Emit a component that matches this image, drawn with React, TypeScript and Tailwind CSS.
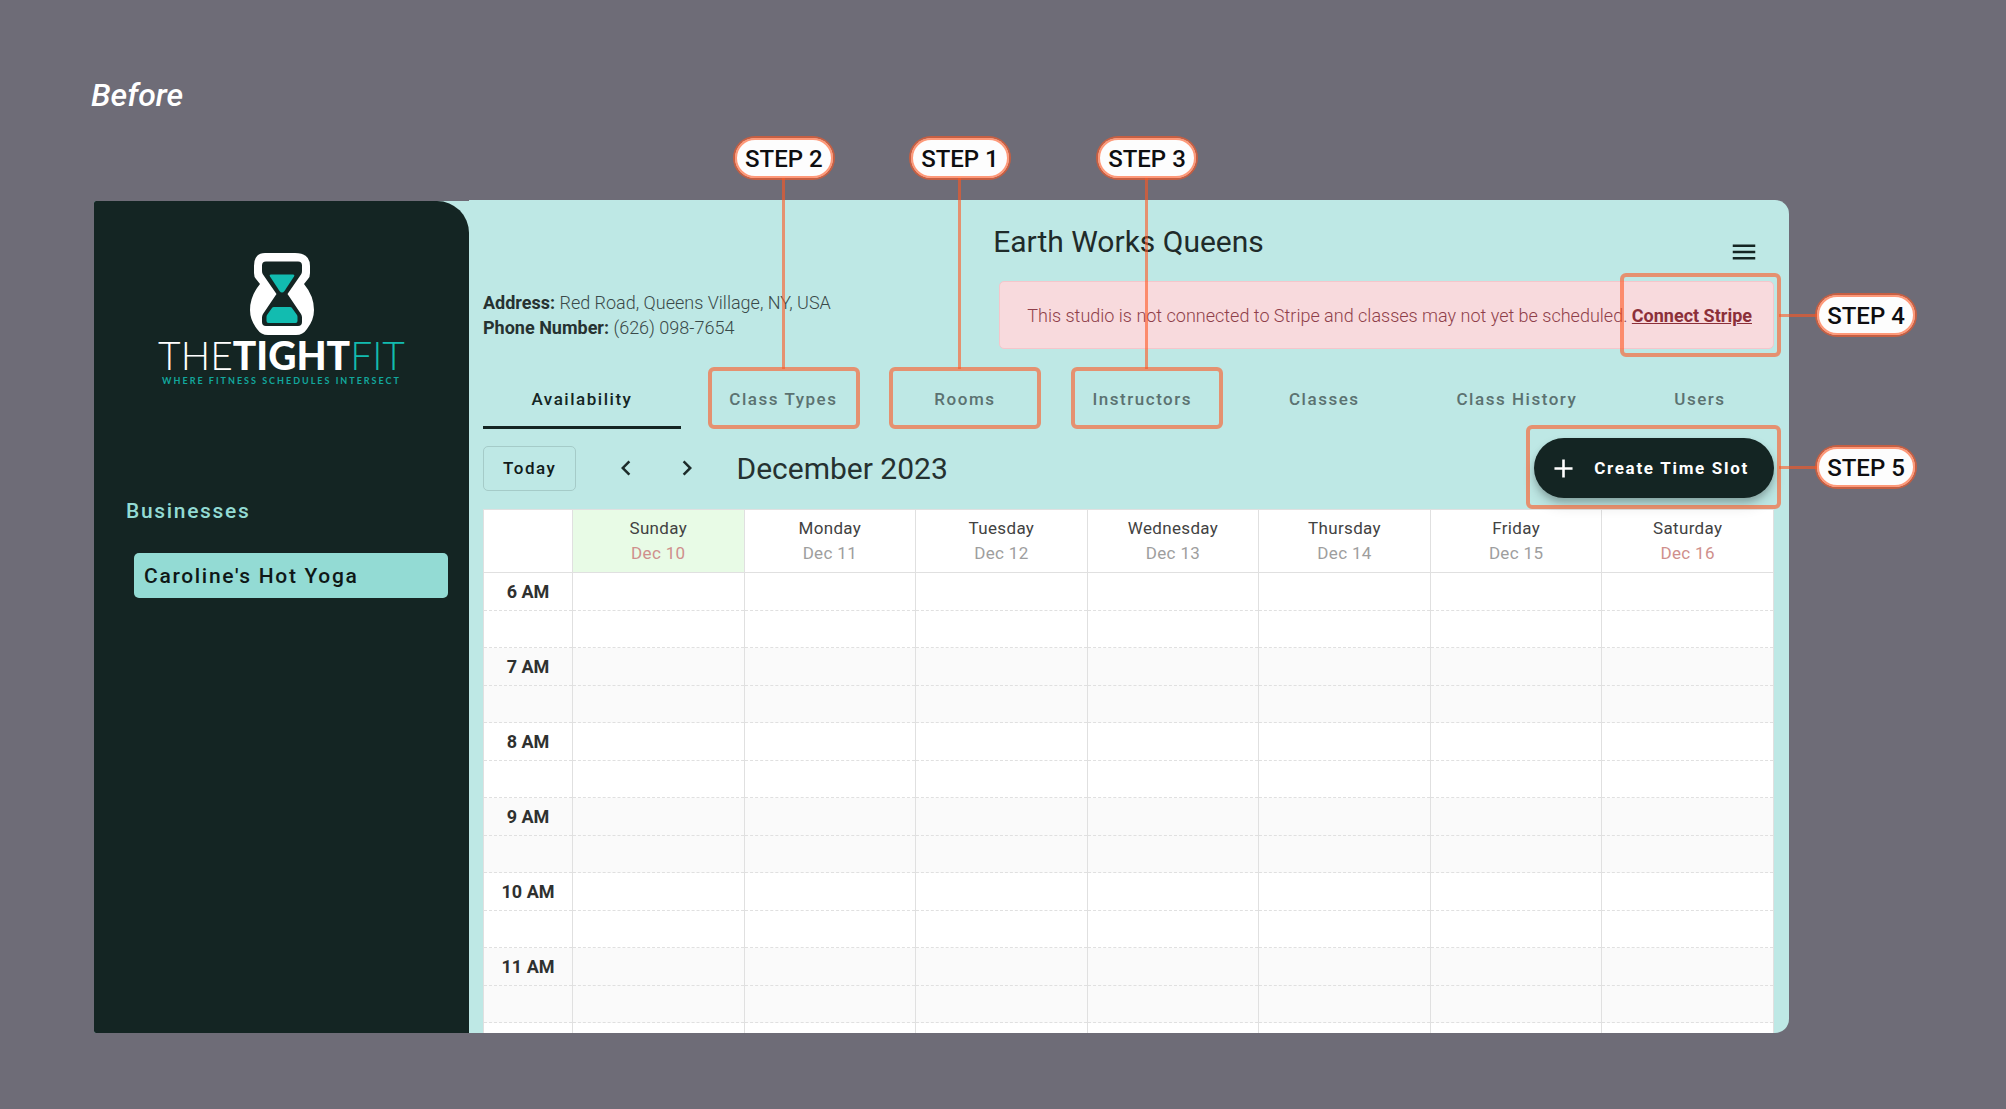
import type { ReactNode } from "react";

const days = [
  { name: "Sunday", date: "Dec 10", today: true, weekend: true },
  { name: "Monday", date: "Dec 11" },
  { name: "Tuesday", date: "Dec 12" },
  { name: "Wednesday", date: "Dec 13" },
  { name: "Thursday", date: "Dec 14" },
  { name: "Friday", date: "Dec 15" },
  { name: "Saturday", date: "Dec 16", weekend: true },
];

const hours = ["6 AM", "7 AM", "8 AM", "9 AM", "10 AM", "11 AM"];

function StepPill({ children }: { children: ReactNode }) {
  return (
    <span className="flex h-10 w-[98px] shrink-0 items-center justify-center rounded-full bg-[#fdfdfd] pt-[2px] text-[24px] leading-8 font-medium whitespace-nowrap text-[#0e0e10] ring-2 ring-[#ff5722]/60 inset-ring-2 inset-ring-[#ff5722]/60">
      {children}
    </span>
  );
}

function TopStep({ label, className }: { label: string; className: string }) {
  return (
    <div className={`pointer-events-none absolute bottom-[60px] z-10 flex -translate-x-1/2 flex-col items-center ${className}`}>
      <StepPill>{label}</StepPill>
      <span className="h-[191px] w-[3px] bg-[#ff5722]/60" />
    </div>
  );
}

function SideStep({ label }: { label: string }) {
  return (
    <div className="pointer-events-none absolute top-1/2 left-full z-10 flex -translate-y-1/2 items-center pl-[2px]">
      <span className="h-[3px] w-[38px] bg-[#ff5722]/60" />
      <StepPill>{label}</StepPill>
    </div>
  );
}

const frame = "pointer-events-none absolute rounded-md border-4 border-[#ff5722]/60";

function Tab({ children, active, callout }: { children: string; active?: boolean; callout?: ReactNode }) {
  return (
    <div className="relative flex flex-auto">
      <button
        type="button"
        role="tab"
        aria-selected={!!active}
        className={`h-[62px] w-full border-b-[3px] pt-[6px] text-[17px] font-medium tracking-[0.09em] ${
          active ? "border-[#142523] text-[#142523]" : "border-transparent text-[#5b7271]"
        }`}
      >
        {children}
      </button>
      {callout}
    </div>
  );
}

function Logo() {
  return (
    <div className="flex flex-col items-center">
      <svg viewBox="0 0 64 82" className="h-[82px] w-16" aria-hidden="true">
        <path
          d="M15 0H45Q60 0 60 13V20Q60 24 58 26L54 31Q64 43 64 57Q64 67 57 76Q53 82 46 82H18Q11 82 7 76Q0 67 0 57Q0 43 10 31L6 26Q4 24 4 20V13Q4 0 15 0Z"
          fill="#fff"
        />
        <path
          d="M16 8.500H48Q52 8.500 52 12.500V18Q52 20 51 21.500L37.500 41L51 61Q52 62.500 52 64.500V69Q52 73 48 73H16Q12 73 12 69V64.500Q12 62.500 13 61L26.500 41L13 21.500Q12 20 12 18V12.500Q12 8.500 16 8.500Z"
          fill="#142523"
        />
        <path d="M21 21.500H43Q45 21.500 44 23.500L34.500 38Q32 41 29.500 38L20 23.500Q19 21.500 21 21.500Z" fill="#12bcb0" />
        <path d="M24 54H40Q41.500 54 42 55L47 62Q47.500 63 47.500 64V68Q47.500 70 45.500 70H18.500Q16.500 70 16.500 68V64Q16.500 63 17 62L22 55Q22.500 54 24 54Z" fill="#12bcb0" />
      </svg>
      <p className="font-['Lato'] text-[39px] leading-[40px] font-light whitespace-nowrap text-white">
        THE<span className="font-black">TIGHT</span>
        <span className="text-[#12bcb0]">FIT</span>
      </p>
      <p className="mt-px font-['Lato'] text-[9px] leading-[10px] font-bold tracking-[2px] whitespace-nowrap text-[#12a79d]">
        WHERE FITNESS SCHEDULES INTERSECT
      </p>
    </div>
  );
}

function Sidebar() {
  return (
    <div className="mt-px flex w-[375px] shrink-0 rounded-l-xs bg-[#bee8e5]">
      <aside className="w-full rounded-l-xs rounded-tr-[32px] bg-[#142523] pt-[52px]">
        <Logo />
        <nav className="mt-[109px]">
          <h2 className="ml-8 text-[21px] leading-8 font-medium tracking-[0.08em] text-[#93dbd4]">Businesses</h2>
          <a
            href="#caroline"
            className="mt-[26px] mr-[21px] ml-10 flex h-[45px] items-center rounded-[5px] bg-[#93dbd4] px-[10px] pt-[2px] text-[21px] font-medium tracking-[0.08em] text-[#0f1817]"
          >
            Caroline's Hot Yoga
          </a>
        </nav>
      </aside>
    </div>
  );
}

function Calendar() {
  return (
    <table className="mt-[11px] w-full table-fixed border-collapse border border-b-0 border-[#e0e0e0] bg-white">
      <colgroup>
        <col className="w-[89px]" />
        {days.map((d) => (
          <col key={d.name} />
        ))}
      </colgroup>
      <thead>
        <tr className="h-[63px]">
          <td className="border border-[#e0e0e0]" />
          {days.map((d) => (
            <th
              key={d.name}
              scope="col"
              className={`border border-[#e0e0e0] p-0 text-[17px] leading-[25px] font-normal tracking-[0.02em] text-[#424242] ${
                d.today ? "bg-[#e8fbe6]" : ""
              }`}
            >
              {d.name}
              <span className={`block ${d.weekend ? "text-[#cf8f8c]" : "text-[#9e9e9e]"}`}>{d.date}</span>
            </th>
          ))}
        </tr>
      </thead>
      {hours.map((h, i) => (
        <tbody key={h} className={i % 2 ? "bg-[#fafafa]" : "bg-white"}>
          <tr className="h-[38px] border-b border-dashed border-[#e0e0e0]">
            <th scope="row" className="border-x border-x-[#e0e0e0] p-0 text-[18px] leading-6 font-bold text-[#2f3130] [border-inline-style:solid]">
              {h}
            </th>
            {days.map((d) => (
              <td key={d.name} className="border-x border-x-[#e0e0e0] [border-inline-style:solid]" />
            ))}
          </tr>
          <tr className="h-[37px] border-b border-dashed border-[#e0e0e0]">
            <td className="border-x border-x-[#e0e0e0] [border-inline-style:solid]" />
            {days.map((d) => (
              <td key={d.name} className="border-x border-x-[#e0e0e0] [border-inline-style:solid]" />
            ))}
          </tr>
        </tbody>
      ))}
      <tbody>
        <tr className="h-[10px]">
          <td className="border-x border-x-[#e0e0e0] p-0 [border-inline-style:solid]" />
          {days.map((d) => (
            <td key={d.name} className="border-x border-x-[#e0e0e0] p-0 [border-inline-style:solid]" />
          ))}
        </tr>
      </tbody>
    </table>
  );
}

export default function App() {
  return (
    <div className="min-h-screen bg-[#6e6c77] pt-[75px] pb-[76px] font-['Roboto',sans-serif]">
      <h1 className="ml-[91px] text-[32px] leading-10 font-medium text-white italic">Before</h1>

      <div className="mt-[85px] mr-[217px] ml-[94px] flex">
        <Sidebar />

        <main className="min-w-0 flex-1 rounded-r-[14px] bg-[#bee8e5] pt-[22px] pr-[15px] pl-[14px]">
          <header className="grid h-[59px] grid-cols-[1fr_auto_1fr]">
            <h2 className="col-start-2 text-[30px] leading-10 text-[#1f2b2a]">Earth Works Queens</h2>
            <button type="button" aria-label="Menu" className="mr-[15px] self-center justify-self-end">
              <svg viewBox="0 0 24 24" className="size-[30px]" fill="#142523" aria-hidden="true">
                <path d="M3 6h18v2H3zM3 11h18v2H3zM3 16h18v2H3z" />
              </svg>
            </button>
          </header>

          <div className="flex items-center justify-between">
            <div className="text-[18px] leading-[25px] font-light text-[#3a4a49]">
              <p>
                <b className="font-bold text-[#263231]">Address:</b> Red Road, Queens Village, NY, USA
              </p>
              <p>
                <b className="font-bold text-[#263231]">Phone Number:</b> (626) 098-7654
              </p>
            </div>
            <div
              role="alert"
              className="relative flex h-[68px] min-w-3/5 items-center justify-end rounded-[5px] border border-[#f5c6cb] bg-[#f8dadd] px-[21px] text-[18px] font-light whitespace-nowrap text-[#8f3f4a]"
            >
              <p>
                This studio is not connected to Stripe and classes may not yet be scheduled.{" "}
                <a href="#stripe" className="font-bold text-[#8c2f39] underline">
                  Connect Stripe
                </a>
              </p>
              <div className={`${frame} -inset-y-[9px] -right-[8px] w-[161px]`}>
                <SideStep label="STEP 4" />
              </div>
            </div>
          </div>

          <div role="tablist" className="mt-[18px] flex">
            <Tab active>Availability</Tab>
            <Tab
              callout={
                <>
                  <div className={`${frame} inset-y-0 left-[27px] w-[152px]`} />
                  <TopStep label="STEP 2" className="left-[103px]" />
                </>
              }
            >
              Class Types
            </Tab>
            <Tab
              callout={
                <>
                  <div className={`${frame} inset-y-0 left-[3px] w-[152px]`} />
                  <TopStep label="STEP 1" className="left-[74px]" />
                </>
              }
            >
              Rooms
            </Tab>
            <Tab
              callout={
                <>
                  <div className={`${frame} inset-y-0 left-[27px] w-[152px]`} />
                  <TopStep label="STEP 3" className="left-[103px]" />
                </>
              }
            >
              Instructors
            </Tab>
            <Tab>Classes</Tab>
            <Tab>Class History</Tab>
            <Tab>Users</Tab>
          </div>

          <div className="mt-[9px] flex items-center">
            <button
              type="button"
              className="h-[45px] rounded-[5px] border border-[#a5cbc8] px-[19px] pt-[2px] text-[17px] font-medium tracking-[0.09em] text-[#101b1a]"
            >
              Today
            </button>
            <button type="button" aria-label="Previous week" className="ml-[35px]">
              <svg viewBox="0 0 24 24" className="size-[30px]" fill="#1d2b2a" aria-hidden="true">
                <path d="M15.410 16.580L10.830 12l4.580-4.590L14 6l-6 6 6 6z" />
              </svg>
            </button>
            <button type="button" aria-label="Next week" className="ml-[31px]">
              <svg viewBox="0 0 24 24" className="size-[30px]" fill="#1d2b2a" aria-hidden="true">
                <path d="M8.590 16.580L13.170 12 8.590 7.410 10 6l6 6-6 6z" />
              </svg>
            </button>
            <h3 className="ml-[34px] pt-px text-[30px] leading-10 text-[#253130]">December 2023</h3>
            <div className="relative ml-auto">
              <button
                type="button"
                className="flex h-[60px] items-center rounded-full bg-[#142523] pr-[25px] pl-[14px] text-[17px] font-bold tracking-[0.1em] text-white shadow-[0_4px_6px_rgba(0,0,0,0.2),0_8px_14px_rgba(0,0,0,0.12)]"
              >
                <svg viewBox="0 0 24 24" className="size-[31px]" fill="#fff" aria-hidden="true">
                  <path d="M19 13h-6v6h-2v-6H5v-2h6V5h2v6h6z" />
                </svg>
                <span className="ml-[15px] pt-[2px]">Create Time Slot</span>
              </button>
              <div className={`${frame} -right-[7px] -bottom-[11px] h-[84px] w-[255px]`}>
                <SideStep label="STEP 5" />
              </div>
            </div>
          </div>

          <Calendar />
        </main>
      </div>
    </div>
  );
}
